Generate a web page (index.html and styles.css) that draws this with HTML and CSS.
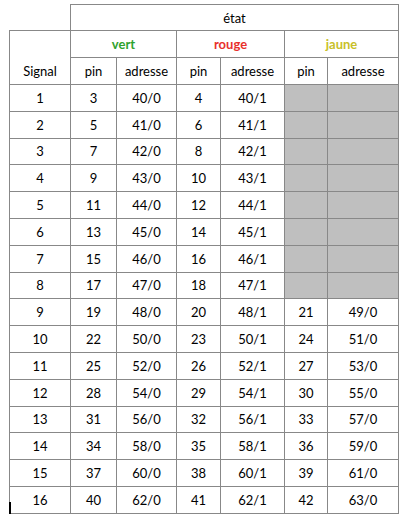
FILE: index.html
```html
<!DOCTYPE html>
<html>
<head>
<meta charset="utf-8">
<link rel="stylesheet" href="styles.css">
</head>
<body>
<div class="page">
<table class="grid">
  <colgroup>
    <col class="c-sig"><col class="c-vp"><col class="c-va"><col class="c-rp"><col class="c-ra"><col class="c-jp"><col class="c-ja">
  </colgroup>
  <thead>
    <tr class="h1">
      <td class="blank"></td>
      <td colspan="6">état</td>
    </tr>
    <tr class="h2">
      <td rowspan="2" class="sig">Signal</td>
      <td colspan="2" class="vert">vert</td>
      <td colspan="2" class="rouge">rouge</td>
      <td colspan="2" class="jaune">jaune</td>
    </tr>
    <tr class="h3">
      <td>pin</td><td>adresse</td><td>pin</td><td>adresse</td><td>pin</td><td>adresse</td>
    </tr>
  </thead>
  <tbody>
    <tr><td>1</td><td>3</td><td>40/0</td><td>4</td><td>40/1</td><td class="off"></td><td class="off"></td></tr>
    <tr><td>2</td><td>5</td><td>41/0</td><td>6</td><td>41/1</td><td class="off"></td><td class="off"></td></tr>
    <tr><td>3</td><td>7</td><td>42/0</td><td>8</td><td>42/1</td><td class="off"></td><td class="off"></td></tr>
    <tr><td>4</td><td>9</td><td>43/0</td><td>10</td><td>43/1</td><td class="off"></td><td class="off"></td></tr>
    <tr><td>5</td><td>11</td><td>44/0</td><td>12</td><td>44/1</td><td class="off"></td><td class="off"></td></tr>
    <tr><td>6</td><td>13</td><td>45/0</td><td>14</td><td>45/1</td><td class="off"></td><td class="off"></td></tr>
    <tr><td>7</td><td>15</td><td>46/0</td><td>16</td><td>46/1</td><td class="off"></td><td class="off"></td></tr>
    <tr><td>8</td><td>17</td><td>47/0</td><td>18</td><td>47/1</td><td class="off"></td><td class="off"></td></tr>
    <tr><td>9</td><td>19</td><td>48/0</td><td>20</td><td>48/1</td><td>21</td><td>49/0</td></tr>
    <tr><td>10</td><td>22</td><td>50/0</td><td>23</td><td>50/1</td><td>24</td><td>51/0</td></tr>
    <tr><td>11</td><td>25</td><td>52/0</td><td>26</td><td>52/1</td><td>27</td><td>53/0</td></tr>
    <tr><td>12</td><td>28</td><td>54/0</td><td>29</td><td>54/1</td><td>30</td><td>55/0</td></tr>
    <tr><td>13</td><td>31</td><td>56/0</td><td>32</td><td>56/1</td><td>33</td><td>57/0</td></tr>
    <tr><td>14</td><td>34</td><td>58/0</td><td>35</td><td>58/1</td><td>36</td><td>59/0</td></tr>
    <tr><td>15</td><td>37</td><td>60/0</td><td>38</td><td>60/1</td><td>39</td><td>61/0</td></tr>
    <tr><td>16</td><td>40</td><td>62/0</td><td>41</td><td>62/1</td><td>42</td><td>63/0</td></tr>
  </tbody>
</table>
<div class="cursor"></div>
</div>
</body>
</html>
```
FILE: styles.css
```css
html, body {
  margin: 0;
  padding: 0;
  background: #ffffff;
}
.page {
  position: relative;
  padding: 4px 0 0 9px;
  font-family: Lato, "Liberation Sans", sans-serif;
  font-size: 13px;
  color: #000;
}
.grid {
  border-collapse: collapse;
  table-layout: fixed;
  width: 389px;
}
.c-sig { width: 61px; }
.c-vp { width: 46px; }
.c-va { width: 60px; }
.c-rp { width: 44px; }
.c-ra { width: 64px; }
.c-jp { width: 43px; }
.c-ja { width: 71px; }
.grid td {
  border: 1px solid #888888;
  text-align: center;
  vertical-align: middle;
  padding: 0;
  line-height: 16px;
}
.grid td.blank {
  border-top: none;
  border-left: none;
  border-bottom: 1px solid #888888;
}
.h1 { height: 26px; }
.h2 { height: 27px; }
.h3 { height: 27px; }
.grid tbody tr { height: 26.8px; }
.grid td.sig {
  vertical-align: bottom;
  padding-bottom: 5px;
}
.vert { color: #2ea22e; font-weight: bold; }
.rouge { color: #e8302c; font-weight: bold; }
.jaune { color: #c8c028; font-weight: bold; }
.grid td.off { background: #bfbfbf; }
.cursor {
  position: absolute;
  left: 9px;
  top: 502px;
  width: 2px;
  height: 15px;
  background: #000;
}
```
